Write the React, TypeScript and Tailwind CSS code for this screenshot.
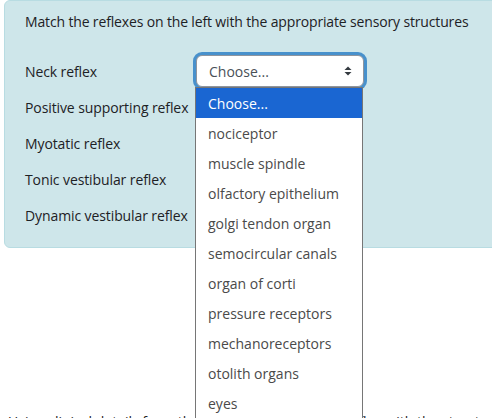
import React from 'react';

const reflexes = [
  'Neck reflex',
  'Positive supporting reflex',
  'Myotatic reflex',
  'Tonic vestibular reflex',
  'Dynamic vestibular reflex',
];

const choices = [
  'Choose...',
  'nociceptor',
  'muscle spindle',
  'olfactory epithelium',
  'golgi tendon organ',
  'semocircular canals',
  'organ of corti',
  'pressure receptors',
  'mechanoreceptors',
  'otolith organs',
  'eyes',
];

function SortIcon() {
  return (
    <svg width="8" height="10" viewBox="0 0 8 10" className="text-[#343a40]">
      <path d="M4 0.5 L7.5 4 H0.5 Z" fill="currentColor" />
      <path d="M4 9.5 L7.5 6 H0.5 Z" fill="currentColor" />
    </svg>
  );
}

export default function App() {
  return (
    <div className="relative min-h-screen overflow-hidden bg-white font-['Open_Sans',sans-serif] text-[#1d2125]">
      <div className="ml-1 mr-[-12px] rounded-md border border-[#b8dce2] bg-[#cee6ea] pl-5 pt-[10px] pb-[14px]">
        <p className="text-[14px] leading-[22px] tracking-[-0.15px]">
          Match the reflexes on the left with the appropriate sensory structures
        </p>
        <div className="mt-[20px] flex flex-col">
          {reflexes.map((r, i) => (
            <div key={r} className="flex h-9 items-center">
              <div className="w-[171px] text-[14px] tracking-[-0.1px]">{r}</div>
              {i === 0 && (
                <div className="flex h-[32px] w-[168px] items-center justify-between rounded-md border border-[#8f959e] bg-white pl-3 pr-[11px] text-[14px] text-[#495057] shadow-[0_0_0_3px_rgba(15,108,191,0.7)]">
                  <span>Choose...</span>
                  <SortIcon />
                </div>
              )}
            </div>
          ))}
        </div>
      </div>

      <p className="mt-[163px] px-2 text-[14px] leading-[22px] whitespace-nowrap">
        Using clinical details from the scenario, match each reflex with the structure that it is linked with in this case
      </p>

      <ul className="absolute left-[195px] top-[87px] w-[168px] border border-[#767676] bg-white text-[14px] text-[#4a4a4a]">
        {choices.map((c, i) => (
          <li
            key={c}
            className={
              i === 0
                ? 'flex h-[30px] items-center bg-[#1a66d2] px-3 text-white'
                : 'flex h-[30px] items-center px-3'
            }
          >
            {c}
          </li>
        ))}
      </ul>
    </div>
  );
}
